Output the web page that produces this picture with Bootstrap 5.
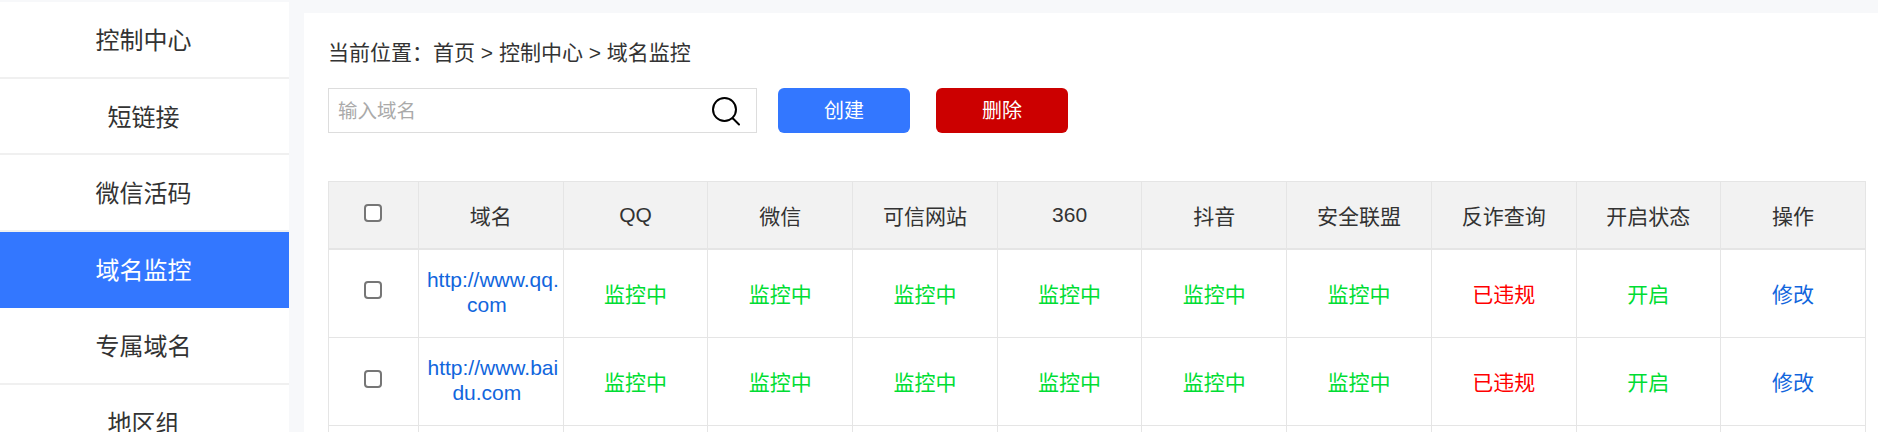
<!DOCTYPE html>
<html lang="en">
<head>
  <meta charset="UTF-8">
  <title>域名监控</title>
  <link href="https://cdn.jsdelivr.net/npm/bootstrap@5.3.0/dist/css/bootstrap.min.css" rel="stylesheet">
  <style>
    body { background: #f7f8fa; height: 432px; overflow: hidden; color: #333; font-family: "Liberation Sans", "Noto Sans CJK SC", sans-serif; }
    .side-menu { width: 289px; margin-top: 2px; background: #fff; }
    .side-item { height: 76.5px; padding-right: 2px; line-height: 77px; text-align: center; font-size: 24px; color: #333; border-bottom: 2px solid #f0f0f0; }
    .side-item.active-item { background: #3377ff; color: #fff; border-bottom-color: #3377ff; }
    .main-panel { margin: 13px 0 0 15px; padding: 0 12px 0 24px; background: #fff; }
    .crumb-line { height: 75px; padding-top: 25px; line-height: 30px; font-size: 21px; }
    .search-box { width: 429px; height: 45px; padding: 0 16px 0 9px; border: 1px solid #ddd; }
    .search-box input { margin-top: 2px; font-size: 19.5px; color: #333; }
    .search-box input::placeholder { color: #aaa; }
    .tool-btn { width: 132px; height: 45px; padding: 0; border: 0; border-radius: 6px; font-size: 20px; color: #fff; }
    .btn-create { background: #3377ff; margin-left: 21px; }
    .btn-remove { background: #cc0000; margin-left: 26px; }
    .watch-table { table-layout: fixed; width: 1537px; margin-top: 48px; border-collapse: collapse; font-size: 21px; text-align: center; }
    .watch-table th, .watch-table td { border: 1px solid #e5e5e5; font-weight: 400; padding: 3px 3px 0; }
    .watch-table th { height: 67px; background: #f2f2f2; border-bottom-width: 2px; }
    .watch-table td { height: 88.5px; line-height: 25px; }
    .watch-table .latin-head { padding: 0 3px; }
    .watch-table .url-cell { padding: 0 8px 2px 0; white-space: nowrap; color: #1166dd; }
    .url-head { margin-left: 6px; margin-right: -6px; }
    .watch-table .check-cell { padding: 0 1px 0 0; }
    .check-cell input { appearance: none; display: inline-block; width: 18px; height: 18px; margin: 0 0 7px; vertical-align: middle; background: #fff; border: 2px solid #767676; border-radius: 4px; }
    .st-green { color: #00dd33; }
    .st-red { color: #ff0000; }
    .st-link { color: #1166dd; }
  </style>
</head>
<body>

<div class="d-flex">
  <div class="side-menu flex-shrink-0">
    <div class="side-item">控制中心</div>
    <div class="side-item">短链接</div>
    <div class="side-item">微信活码</div>
    <div class="side-item active-item">域名监控</div>
    <div class="side-item">专属域名</div>
    <div class="side-item">地区组</div>
  </div>

  <div class="main-panel flex-grow-1">
    <div class="crumb-line">当前位置：首页 &gt; 控制中心 &gt; 域名监控</div>

    <div class="d-flex">
      <div class="search-box d-flex align-items-center">
        <input type="text" class="border-0 p-0 flex-grow-1" placeholder="输入域名">
        <svg width="30" height="30" viewBox="0 0 30 30" fill="none" stroke="#000" stroke-width="2">
          <circle cx="14.5" cy="13.5" r="11.5"/>
          <path d="M23 22.5l6 6" stroke-linecap="round"/>
        </svg>
      </div>
      <button class="tool-btn btn-create">创建</button>
      <button class="tool-btn btn-remove">删除</button>
    </div>

    <table class="watch-table">
      <colgroup>
        <col style="width:90px">
        <col span="10" style="width:144.7px">
      </colgroup>
      <thead>
        <tr>
          <th class="check-cell"><input type="checkbox"></th>
          <th>域名</th><th class="latin-head">QQ</th><th>微信</th><th>可信网站</th><th class="latin-head">360</th>
          <th>抖音</th><th>安全联盟</th><th>反诈查询</th><th>开启状态</th><th>操作</th>
        </tr>
      </thead>
      <tbody>
        <tr>
          <td class="check-cell"><input type="checkbox"></td>
          <td class="url-cell"><span class="url-head">http://www.qq.</span><br>com</td>
          <td class="st-green">监控中</td><td class="st-green">监控中</td><td class="st-green">监控中</td>
          <td class="st-green">监控中</td><td class="st-green">监控中</td><td class="st-green">监控中</td>
          <td class="st-red">已违规</td><td class="st-green">开启</td><td class="st-link">修改</td>
        </tr>
        <tr>
          <td class="check-cell"><input type="checkbox"></td>
          <td class="url-cell"><span class="url-head">http://www.bai</span><br>du.com</td>
          <td class="st-green">监控中</td><td class="st-green">监控中</td><td class="st-green">监控中</td>
          <td class="st-green">监控中</td><td class="st-green">监控中</td><td class="st-green">监控中</td>
          <td class="st-red">已违规</td><td class="st-green">开启</td><td class="st-link">修改</td>
        </tr>
        <tr>
          <td></td><td></td><td></td><td></td><td></td><td></td><td></td><td></td><td></td><td></td><td></td>
        </tr>
      </tbody>
    </table>
  </div>
</div>

</body>
</html>
